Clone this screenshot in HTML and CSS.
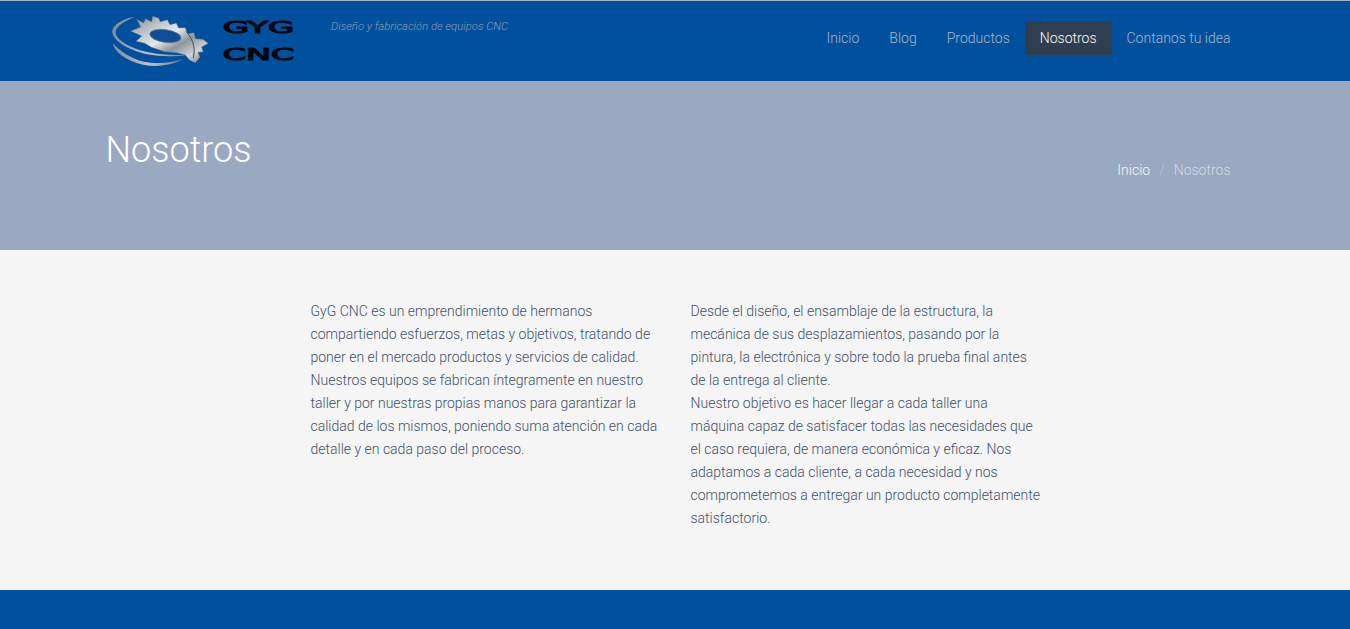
FILE: index.html
```html
<!DOCTYPE html>
<html lang="es">
<head>
<meta charset="utf-8">
<title>Nosotros</title>
<link rel="stylesheet" href="styles.css">
</head>
<body>
<header class="topbar">
  <div class="container topbar-inner">
    <div class="brand">
      <a class="logo" href="#">
        <svg width="195" height="60" viewBox="0 0 585 180" aria-label="GyG CNC">
          <defs>
            <linearGradient id="metal" x1="0" y1="0" x2="1" y2="1">
              <stop offset="0" stop-color="#7d858e"/>
              <stop offset=".25" stop-color="#bcc1c6"/>
              <stop offset=".45" stop-color="#e6e8ea"/>
              <stop offset=".62" stop-color="#8f959c"/>
              <stop offset=".8" stop-color="#cfd2d5"/>
              <stop offset="1" stop-color="#666e77"/>
            </linearGradient>
            <linearGradient id="swoosh" x1="0" y1="0" x2="1" y2="0">
              <stop offset="0" stop-color="#7f8b99"/>
              <stop offset=".5" stop-color="#bcc2c8"/>
              <stop offset="1" stop-color="#74818e"/>
            </linearGradient>
            <filter id="soft" x="-5%" y="-5%" width="110%" height="110%">
              <feGaussianBlur stdDeviation="0.7"/>
            </filter>
          </defs>
          <g filter="url(#soft)">
            <path d="M78 21C40 28 10 48 13 68C16 92 60 120 118 133C160 141 205 140 242 134C200 136 160 135 118 126C68 114 24 90 23 68C22 50 48 34 78 21Z" fill="url(#swoosh)"/>
            <path d="M14 99C18 125 52 152 105 164C150 173 195 165 224 148C190 158 150 163 108 155C70 147 35 124 14 99Z" fill="url(#swoosh)"/>
            <path d="M28 115C40 128 55 136 70 142" fill="none" stroke="#8f99a5" stroke-width="2"/>
            <path d="M86 28L107 38L113 26L131 35L134 19L152 24L157 35L178 29L186 44L205 39L212 54L232 53L239 71L258 68L263 86L285 88L301 100L281 111L286 126L270 127L276 141L262 159L244 150L232 135L205 128L170 125L130 112L110 100L84 94L101 78L67 63L98 51Z" fill="url(#metal)" stroke="#56626f" stroke-width="1.5"/>
            <path d="M234 64C254 87 263 110 256 144" fill="none" stroke="#3f4c5a" stroke-width="3"/>
            <ellipse cx="172" cy="78" rx="47" ry="19" transform="rotate(8 172 78)" fill="#0a4f96" stroke="#5f6b78" stroke-width="2"/>
          </g>
          <text class="logo-word" x="344" y="68" textLength="215" lengthAdjust="spacingAndGlyphs">GYG</text>
          <text class="logo-word" x="344" y="149" textLength="215" lengthAdjust="spacingAndGlyphs">CNC</text>
        </svg>
      </a>
      <p class="tagline">Diseño y fabricación de equipos CNC</p>
    </div>
    <nav class="menu">
      <a href="#">Inicio</a>
      <a href="#">Blog</a>
      <a href="#">Productos</a>
      <a class="active" href="#">Nosotros</a>
      <a href="#">Contanos tu idea</a>
    </nav>
  </div>
</header>

<section class="hero">
  <div class="container hero-inner">
    <h1>Nosotros</h1>
    <ol class="crumbs">
      <li><a href="#">Inicio</a></li>
      <li class="sep">/</li>
      <li class="current">Nosotros</li>
    </ol>
  </div>
</section>

<main class="content">
  <div class="columns">
    <p>GyG CNC es un emprendimiento de hermanos compartiendo esfuerzos, metas y objetivos, tratando de poner en el mercado productos y servicios de calidad.<br>Nuestros equipos se fabrican íntegramente en nuestro taller y por nuestras propias manos para garantizar la calidad de los mismos, poniendo suma atención en cada detalle y en cada paso del proceso.</p>
    <p>Desde el diseño, el ensamblaje de la estructura, la mecánica de sus desplazamientos, pasando por la pintura, la electrónica y sobre todo la prueba final antes de la entrega al cliente.<br>Nuestro objetivo es hacer llegar a cada taller una máquina capaz de satisfacer todas las necesidades que el caso requiera, de manera económica y eficaz. Nos adaptamos a cada cliente, a cada necesidad y nos comprometemos a entregar un producto completamente satisfactorio.</p>
  </div>
</main>

<footer class="footer"></footer>
</body>
</html>
```
FILE: styles.css
```css
* { box-sizing: border-box; }
html, body { height: 100%; }
body {
  margin: 0;
  font-family: Roboto, "Liberation Sans", sans-serif;
  font-weight: 300;
  font-size: 14px;
  background: #f5f5f5;
  color: #3f5069;
  overflow: hidden;
}
a { text-decoration: none; color: inherit; }
.container { width: 1141px; margin: 0 auto; padding-left: 1px; }

.topbar {
  height: 81px;
  background: #00509d;
  border-top: 1px solid #a9b2be;
}
.topbar-inner {
  display: flex;
  justify-content: space-between;
  align-items: flex-start;
}
.brand { display: flex; align-items: flex-start; }
.logo { display: block; margin: 9px 0 0 2.5px; height: 60px; line-height: 0; }
.logo-word {
  font-family: "DejaVu Sans", sans-serif;
  font-weight: 400;
  font-size: 46px;
  fill: #05070c;
  stroke: #05070c;
  stroke-width: 3px;
}
.tagline {
  margin: 19px 0 0 28px;
  font-size: 11.3px;
  line-height: 14px;
  font-style: italic;
  color: #8c9db3;
}
.menu { display: flex; margin-top: 20px; }
.menu a {
  display: block;
  padding: 7px 15px;
  line-height: 20px;
  color: #a9b6c6;
  border-radius: 3px;
}
.menu a.active { background: #2f3e50; color: #ffffff; }

.hero {
  height: 169px;
  background: #9aa8c2;
}
.hero-inner {
  display: flex;
  justify-content: space-between;
  align-items: flex-start;
  padding-right: 15px;
}
.hero h1 {
  margin: 47px 0 0;
  font-size: 36px;
  line-height: 44px;
  font-weight: 300;
  color: #ffffff;
}
.crumbs {
  display: flex;
  gap: 9px;
  margin: 79px 0 0;
  padding: 0;
  list-style: none;
  line-height: 20px;
}
.crumbs a { color: #f4f6f9; }
.crumbs .sep { color: #b7c1d3; }
.crumbs .current { color: #d3d9e4; }

.content {
  height: 340px;
  padding-top: 50px;
}
.columns {
  display: grid;
  grid-template-columns: 350px 350px;
  gap: 30px;
  width: 731px;
  padding-left: 1px;
  margin: 0 auto;
}
.columns p { margin: 0; line-height: 23px; }

.footer { height: 39px; background: #00509d; }
```
